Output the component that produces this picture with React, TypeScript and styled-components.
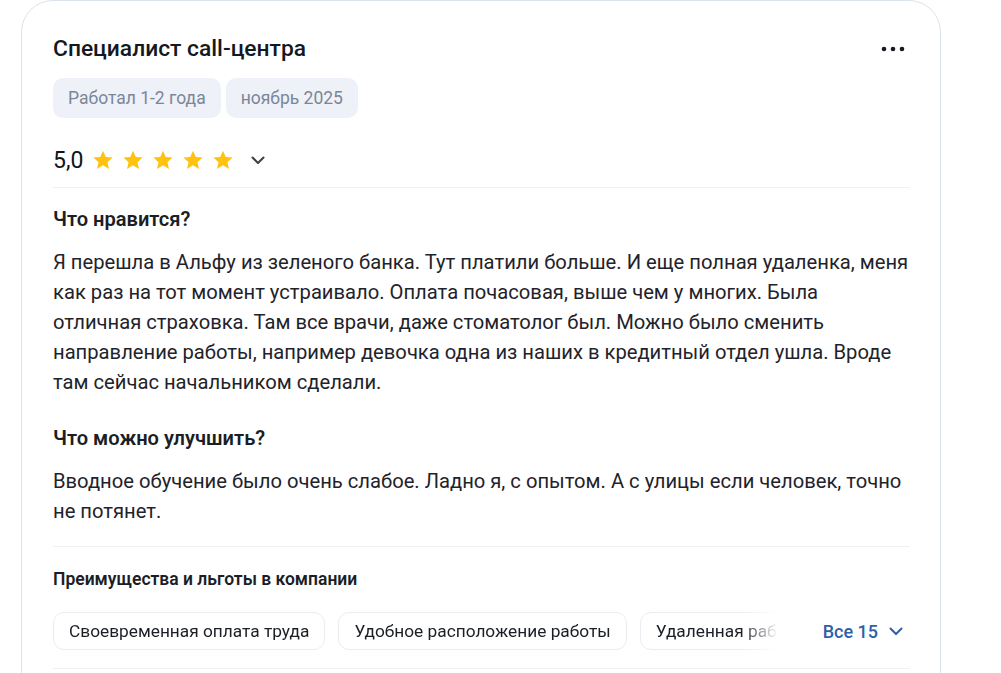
import React from 'react';
import styled, { createGlobalStyle } from 'styled-components';

const GlobalStyle = createGlobalStyle`
  body {
    margin: 0;
    background: #ffffff;
    font-family: Roboto, "Noto Sans", Arial, sans-serif;
    color: #1b1e25;
  }
`;

const Page = styled.div`
  padding: 0 0 0 21px;
  height: 673px;
  overflow: hidden;
`;

const Card = styled.div`
  width: 920px;
  box-sizing: border-box;
  border: 1px solid #dde3ec;
  border-radius: 32px;
  padding: 34px 30px 40px 31px;
  background: #fff;
`;

const Header = styled.div`
  display: flex;
  justify-content: space-between;
  align-items: center;
`;

const Title = styled.h2`
  margin: 0;
  font-size: 22.8px;
  line-height: 28px;
  font-weight: 500;
  color: #141820;
`;

const MoreButton = styled.button`
  border: 0;
  background: none;
  padding: 0;
  margin-right: 5px;
  display: flex;
  cursor: pointer;
`;

const Tags = styled.div`
  display: flex;
  gap: 5px;
  margin-top: 15px;
`;

const Tag = styled.span`
  height: 40px;
  display: inline-flex;
  align-items: center;
  padding: 0 15px;
  border-radius: 10px;
  background: #eef1f7;
  color: #7b8699;
  font-size: 17.5px;
`;

const RatingRow = styled.div`
  display: flex;
  align-items: center;
  height: 28px;
  margin-top: 28px;
  padding-bottom: 13px;
  border-bottom: 1px solid #eef0f4;
`;

const Score = styled.span`
  font-size: 23px;
  font-weight: 400;
  color: #111418;
  margin-right: 9px;
`;

const Stars = styled.div`
  display: flex;
  gap: 8px;
  margin-right: 16px;
`;

const Section = styled.section<{ $top: number }>`
  margin-top: ${(p) => p.$top}px;
`;

const SectionTitle = styled.h3`
  margin: 0;
  font-size: 20.1px;
  line-height: 24px;
  font-weight: 600;
  color: #1b1e25;
`;

const Text = styled.p`
  margin: 16px 0 0;
  font-size: 20.2px;
  line-height: 30px;
  color: #1f232b;
`;

const Benefits = styled.div`
  margin-top: 20px;
  padding-top: 21px;
  border-top: 1px solid #eef0f4;
  border-bottom: 1px solid #eef0f4;
  padding-bottom: 18px;
`;

const BenefitsTitle = styled.h4`
  margin: 0;
  font-size: 17.5px;
  line-height: 22px;
  font-weight: 600;
  color: #1b1e25;
`;

const BenefitsRow = styled.div`
  display: flex;
  align-items: center;
  margin-top: 22px;
`;

const ChipTrack = styled.div`
  flex: 0 0 725px;
  display: flex;
  gap: 13px;
  overflow: hidden;
  -webkit-mask-image: linear-gradient(to right, #000 688px, transparent 725px);
  mask-image: linear-gradient(to right, #000 688px, transparent 725px);
`;

const Chip = styled.span`
  flex: none;
  height: 38px;
  box-sizing: border-box;
  display: inline-flex;
  align-items: center;
  padding: 0 15px;
  border: 1px solid #e9ecf1;
  border-radius: 11px;
  font-size: 17.3px;
  color: #1b1e25;
  white-space: nowrap;
`;

const ShowAll = styled.button`
  margin-left: auto;
  margin-right: 6px;
  display: flex;
  align-items: center;
  gap: 10px;
  border: 0;
  background: none;
  padding: 0;
  font-family: inherit;
  font-size: 18px;
  font-weight: 500;
  color: #2f5fa7;
  cursor: pointer;
`;

const Star = () => (
  <svg width="22" height="22" viewBox="0 0 24 24">
    <path
      d="M12 1.8l3.05 6.9 7.45.7-5.65 4.95 1.7 7.35L12 17.8l-6.55 3.9 1.7-7.35L1.5 9.4l7.45-.7z"
      fill="#ffc20e"
    />
  </svg>
);

const Chevron = ({ color }: { color: string }) => (
  <svg width="16" height="16" viewBox="0 0 16 16" fill="none">
    <path d="M2.5 5.5L8 11l5.5-5.5" stroke={color} strokeWidth="2" strokeLinecap="round" strokeLinejoin="round" />
  </svg>
);

const benefits = [
  'Своевременная оплата труда',
  'Удобное расположение работы',
  'Удаленная работа',
];

function App() {
  return (
    <Page>
      <GlobalStyle />
      <Card>
        <Header>
          <Title>Специалист call-центра</Title>
          <MoreButton aria-label="Ещё">
            <svg width="24" height="6" viewBox="0 0 24 6">
              <circle cx="3" cy="3" r="2.3" fill="#161a22" />
              <circle cx="12" cy="3" r="2.3" fill="#161a22" />
              <circle cx="21" cy="3" r="2.3" fill="#161a22" />
            </svg>
          </MoreButton>
        </Header>
        <Tags>
          <Tag>Работал 1-2 года</Tag>
          <Tag>ноябрь 2025</Tag>
        </Tags>
        <RatingRow>
          <Score>5,0</Score>
          <Stars>
            {[0, 1, 2, 3, 4].map((i) => (
              <Star key={i} />
            ))}
          </Stars>
          <Chevron color="#3b3f47" />
        </RatingRow>
        <Section $top={19}>
          <SectionTitle>Что нравится?</SectionTitle>
          <Text>
            Я перешла в Альфу из зеленого банка. Тут платили больше. И еще полная удаленка, меня
            как раз на тот момент устраивало. Оплата почасовая, выше чем у многих. Была отличная
            страховка. Там все врачи, даже стоматолог был. Можно было сменить направление работы,
            например девочка одна из наших в кредитный отдел ушла. Вроде там сейчас начальником
            сделали.
          </Text>
        </Section>
        <Section $top={29}>
          <SectionTitle>Что можно улучшить?</SectionTitle>
          <Text>
            Вводное обучение было очень слабое. Ладно я, с опытом. А с улицы если человек, точно
            не потянет.
          </Text>
        </Section>
        <Benefits>
          <BenefitsTitle>Преимущества и льготы в компании</BenefitsTitle>
          <BenefitsRow>
            <ChipTrack>
              {benefits.map((b) => (
                <Chip key={b}>{b}</Chip>
              ))}
            </ChipTrack>
            <ShowAll>
              Все 15
              <Chevron color="#2f5fa7" />
            </ShowAll>
          </BenefitsRow>
        </Benefits>
      </Card>
    </Page>
  );
}

export default App;
